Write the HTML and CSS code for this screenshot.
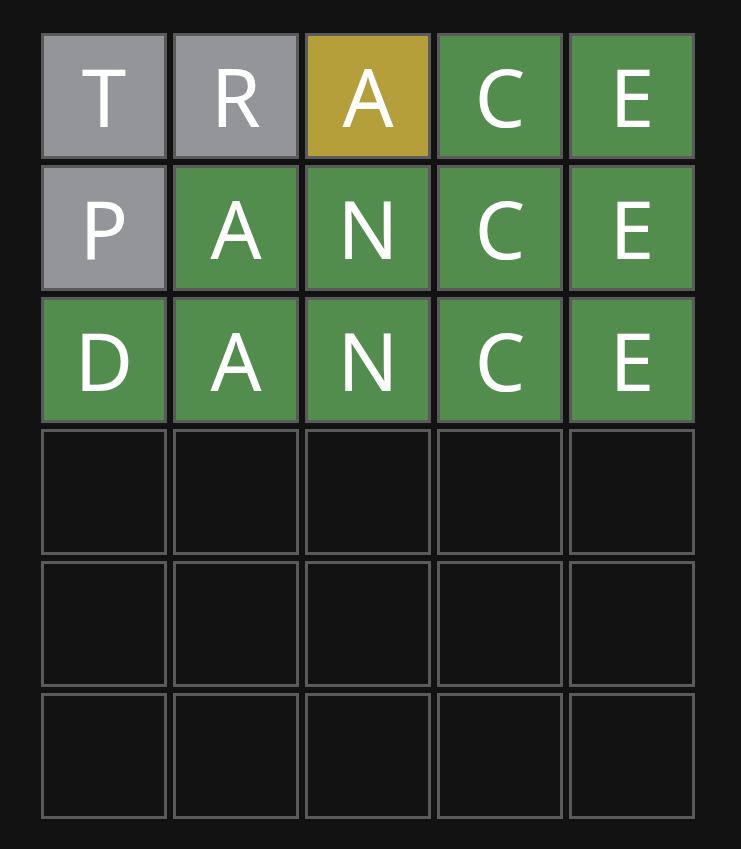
FILE: index.html
```html
<!DOCTYPE html>
<html>
<head>
<meta charset="utf-8">
<link rel="stylesheet" href="styles.css">
</head>
<body>
<div class="board">
  <div class="tile absent">T</div>
  <div class="tile absent">R</div>
  <div class="tile present">A</div>
  <div class="tile correct">C</div>
  <div class="tile correct">E</div>
  <div class="tile absent">P</div>
  <div class="tile correct">A</div>
  <div class="tile correct">N</div>
  <div class="tile correct">C</div>
  <div class="tile correct">E</div>
  <div class="tile correct">D</div>
  <div class="tile correct">A</div>
  <div class="tile correct">N</div>
  <div class="tile correct">C</div>
  <div class="tile correct">E</div>
  <div class="tile"></div><div class="tile"></div><div class="tile"></div><div class="tile"></div><div class="tile"></div>
  <div class="tile"></div><div class="tile"></div><div class="tile"></div><div class="tile"></div><div class="tile"></div>
  <div class="tile"></div><div class="tile"></div><div class="tile"></div><div class="tile"></div><div class="tile"></div>
</div>
</body>
</html>
```
FILE: styles.css
```css
html, body {
  margin: 0;
  padding: 0;
  background: #121212;
  height: 100%;
}
body {
  padding: 33px 0 0 41px;
  box-sizing: border-box;
  font-family: "Noto Sans", "Open Sans", sans-serif;
}
.board {
  display: grid;
  grid-template-columns: repeat(5, 126px);
  grid-auto-rows: 126px;
  gap: 6px;
}
.tile {
  box-sizing: border-box;
  border: 3px solid #5a5a5b;
  background: #121212;
  color: #ffffff;
  display: flex;
  align-items: center;
  justify-content: center;
  font-size: 80px;
  line-height: 1;
  font-weight: 400;
}
.absent { background: #939598; }
.present { background: #b59f3b; }
.correct { background: #538d4e; }
```
